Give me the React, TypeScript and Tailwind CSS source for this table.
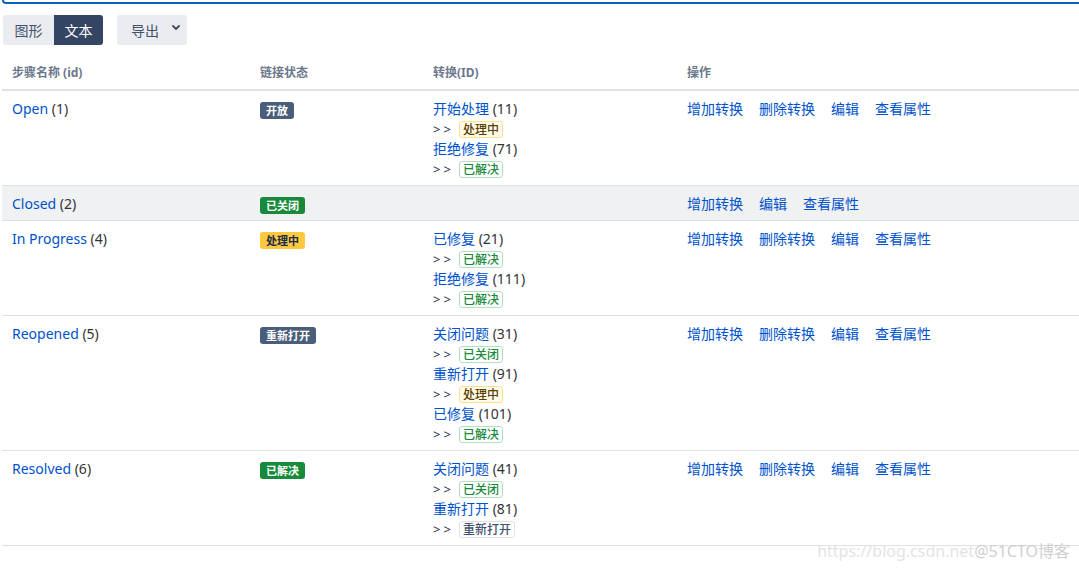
import React from "react";

type Tone = "dark" | "green" | "yellow";
type Subtle = "yellow" | "green" | "gray";

const solid: Record<Tone, string> = {
  dark: "bg-[#4a5d7a] text-white",
  green: "bg-[#168a3a] text-white",
  yellow: "bg-[#ffc83d] text-[#172b4d]",
};

const subtle: Record<Subtle, string> = {
  yellow: "border-[#ffe08a] bg-[#fffbea] text-[#5a3e00]",
  green: "border-[#b3dfc0] bg-white text-[#168a3a]",
  gray: "border-[#dfe1e6] bg-white text-[#42526e]",
};

function Lozenge({ tone, children }: { tone: Tone; children: React.ReactNode }) {
  return (
    <span
      className={`inline-block rounded-[3px] px-[6px] text-[11px] font-bold leading-[17px] align-middle ${solid[tone]}`}
    >
      {children}
    </span>
  );
}

function SubtleLozenge({ tone, children }: { tone: Subtle; children: React.ReactNode }) {
  return (
    <span
      className={`inline-block rounded-[3px] border px-[3px] text-[12px] font-medium leading-[15px] ${subtle[tone]}`}
    >
      {children}
    </span>
  );
}

type Transition = { name: string; id: number; target: string; tone: Subtle };

type Step = {
  name: string;
  id: number;
  status: string;
  tone: Tone;
  transitions: Transition[];
  actions: string[];
  shaded?: boolean;
};

const fullActions = ["增加转换", "删除转换", "编辑", "查看属性"];

const steps: Step[] = [
  {
    name: "Open",
    id: 1,
    status: "开放",
    tone: "dark",
    transitions: [
      { name: "开始处理", id: 11, target: "处理中", tone: "yellow" },
      { name: "拒绝修复", id: 71, target: "已解决", tone: "green" },
    ],
    actions: fullActions,
  },
  {
    name: "Closed",
    id: 2,
    status: "已关闭",
    tone: "green",
    transitions: [],
    actions: ["增加转换", "编辑", "查看属性"],
    shaded: true,
  },
  {
    name: "In Progress",
    id: 4,
    status: "处理中",
    tone: "yellow",
    transitions: [
      { name: "已修复", id: 21, target: "已解决", tone: "green" },
      { name: "拒绝修复", id: 111, target: "已解决", tone: "green" },
    ],
    actions: fullActions,
  },
  {
    name: "Reopened",
    id: 5,
    status: "重新打开",
    tone: "dark",
    transitions: [
      { name: "关闭问题", id: 31, target: "已关闭", tone: "green" },
      { name: "重新打开", id: 91, target: "处理中", tone: "yellow" },
      { name: "已修复", id: 101, target: "已解决", tone: "green" },
    ],
    actions: fullActions,
  },
  {
    name: "Resolved",
    id: 6,
    status: "已解决",
    tone: "green",
    transitions: [
      { name: "关闭问题", id: 41, target: "已关闭", tone: "green" },
      { name: "重新打开", id: 81, target: "重新打开", tone: "gray" },
    ],
    actions: fullActions,
  },
];

const cols = "grid grid-cols-[248px_173px_254px_1fr]";

export default function App() {
  return (
    <div
      className="relative h-[570px] w-[1079px] overflow-hidden bg-white text-[14px] text-[#333]"
      style={{ fontFamily: '"Noto Sans", "Noto Sans CJK SC", sans-serif' }}
    >
      <div className="ml-[2px] -mr-2 h-1 rounded-b-[4px] border-x-2 border-b-2 border-[#0b62c0]" />

      <div className="ml-[3px] mt-[11px] flex items-center">
        <div className="flex">
          <button className="h-[30px] w-[51px] rounded-l-[3px] bg-[#ebecf0] text-[14px] text-[#42526e]">
            图形
          </button>
          <button className="h-[30px] w-[49px] rounded-r-[3px] bg-[#344563] text-[14px] text-white">
            文本
          </button>
        </div>
        <button className="ml-[14px] flex h-[30px] w-[70px] items-center rounded-[3px] bg-[#ebecf0] pl-[14px] text-[14px] text-[#42526e]">
          导出
          <svg className="ml-[13px] mt-[-5px]" width="8" height="5" viewBox="0 0 8 5">
            <path d="M1 1 L4 4 L7 1" fill="none" stroke="#42526e" strokeWidth="1.8" strokeLinecap="round" strokeLinejoin="round" />
          </svg>
        </button>
      </div>

      <div className="ml-[2px] mt-[18px]">
        <div className={`${cols} border-b-2 border-[#dfe1e6] pb-[6px] text-[12px] font-bold leading-5 text-[#6b778c]`}>
          <div className="px-[10px]">步骤名称 (id)</div>
          <div className="px-[10px]">链接状态</div>
          <div className="px-[10px]">转换(ID)</div>
          <div className="px-[10px]">操作</div>
        </div>

        {steps.map((s) => (
          <div
            key={s.id}
            className={`${cols} border-b border-[#dfe1e6] pt-2 pb-[6px] leading-5 ${s.shaded ? "bg-[#f0f1f2]" : ""}`}
          >
            <div className="px-[10px]">
              <a className="text-[#0052cc]">{s.name}</a> ({s.id})
            </div>
            <div className="px-[10px]">
              <Lozenge tone={s.tone}>{s.status}</Lozenge>
            </div>
            <div className="px-[10px]">
              {s.transitions.map((t) => (
                <div key={t.id}>
                  <div>
                    <a className="text-[#0052cc]">{t.name}</a> ({t.id})
                  </div>
                  <div className="flex h-5 items-center gap-[5px] text-[13px] text-[#172b4d]">
                    <span className="tracking-[3px]">&gt;&gt;</span>
                    <SubtleLozenge tone={t.tone}>{t.target}</SubtleLozenge>
                  </div>
                </div>
              ))}
            </div>
            <div className="flex gap-4 px-[10px] text-[#0052cc]">
              {s.actions.map((a) => (
                <a key={a}>{a}</a>
              ))}
            </div>
          </div>
        ))}
      </div>

      <div className="absolute right-[9px] top-[541px] text-[16px] leading-5 text-[#e4e4e4]">
        https://blog.csdn.net<span className="text-[#cfcfcf]">@51CTO博客</span>
      </div>
    </div>
  );
}
